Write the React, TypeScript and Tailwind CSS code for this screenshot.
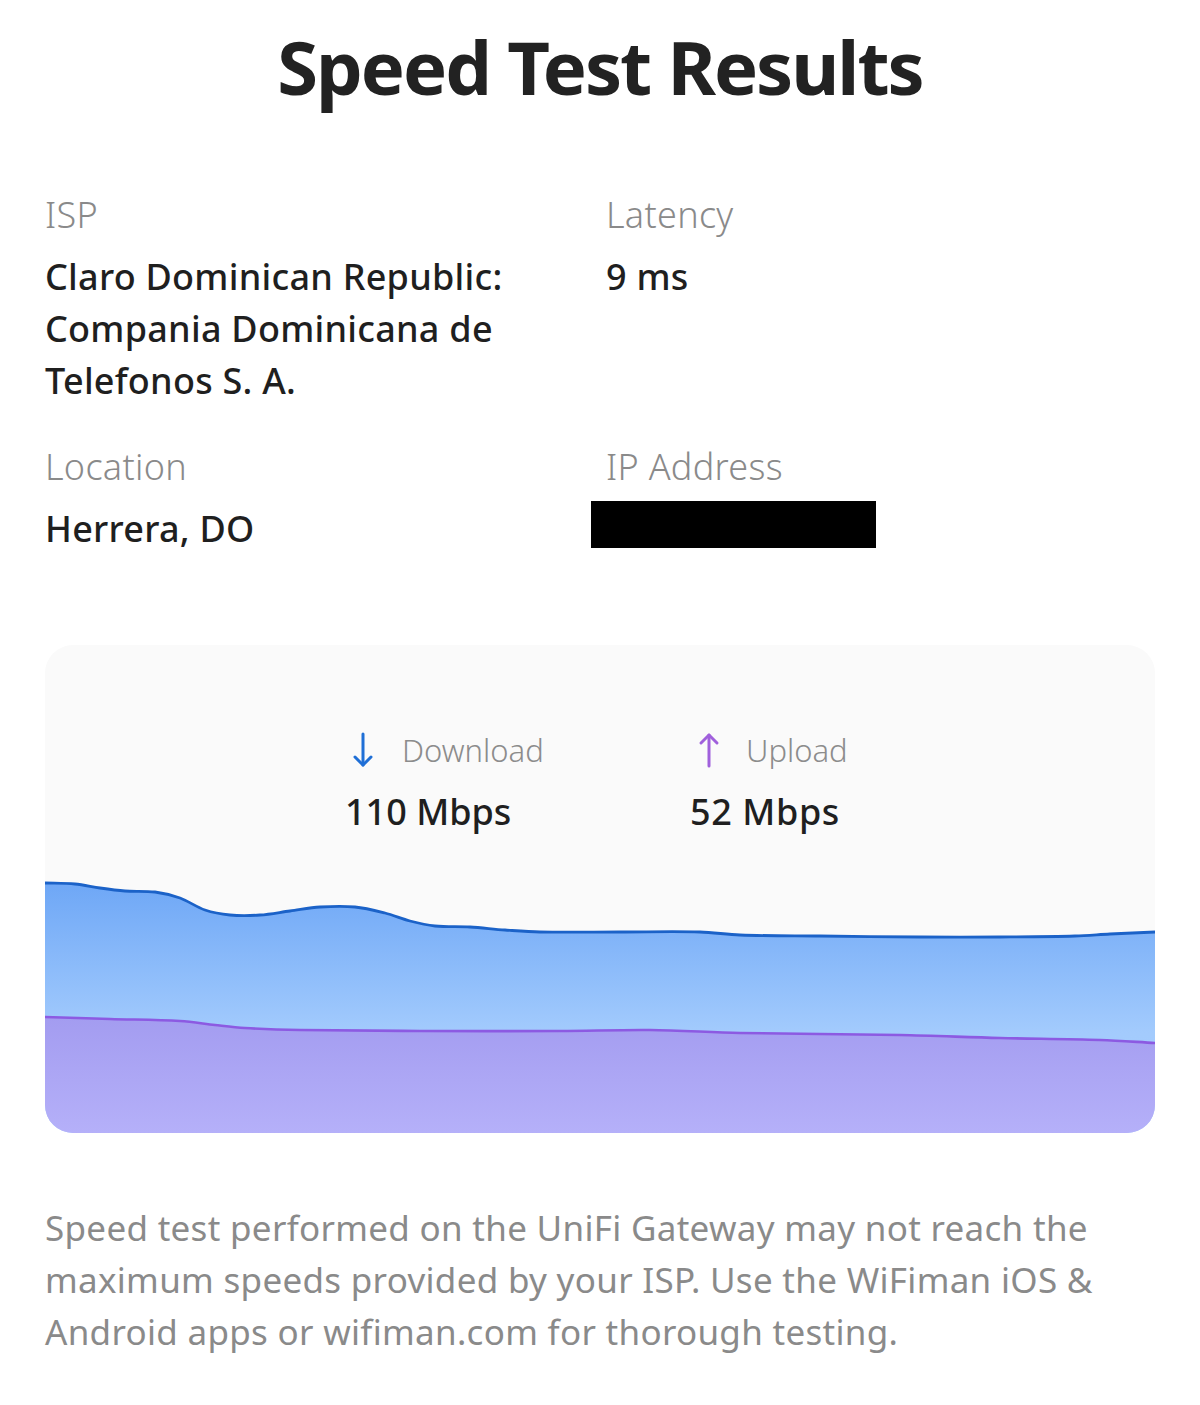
import React from "react";

type P = [number, number];

function smoothPath(pts: P[]): string {
  const n = pts.length;
  const slopes = pts.map((p, i) => {
    const a = pts[Math.max(0, i - 1)];
    const b = pts[Math.min(n - 1, i + 1)];
    return (b[1] - a[1]) / (b[0] - a[0]);
  });
  let d = `M${pts[0][0]},${pts[0][1]}`;
  for (let i = 0; i < n - 1; i++) {
    const p1 = pts[i];
    const p2 = pts[i + 1];
    const dx = (p2[0] - p1[0]) / 3;
    const c1x = p1[0] + dx;
    const c1y = p1[1] + slopes[i] * dx;
    const c2x = p2[0] - dx;
    const c2y = p2[1] - slopes[i + 1] * dx;
    d += ` C${c1x.toFixed(1)},${c1y.toFixed(1)} ${c2x.toFixed(1)},${c2y.toFixed(1)} ${p2[0]},${p2[1]}`;
  }
  return d;
}

const W = 1110;
const H = 260;
const TOP = 873;
const L = 45;

const downAbs: P[] = [
  [45, 883], [75, 884], [100, 888], [125, 891], [155, 892], [180, 898], [205, 910],
  [230, 915], [260, 915], [290, 911], [320, 907], [355, 907], [385, 913], [410, 921],
  [435, 926], [470, 927], [505, 930], [540, 932], [620, 932], [700, 932], [740, 935],
  [820, 936], [920, 937], [1000, 937], [1075, 936], [1110, 934], [1155, 932],
];
const upAbs: P[] = [
  [45, 1017], [110, 1019], [180, 1021], [215, 1025], [245, 1028], [300, 1030],
  [420, 1031], [560, 1031], [650, 1030], [740, 1033], [900, 1035], [1000, 1038],
  [1100, 1040], [1155, 1043],
];
const down = downAbs.map(([x, y]) => [x - L, y - TOP] as P);
const up = upAbs.map(([x, y]) => [x - L, y - TOP] as P);

function Chart() {
  const dLine = smoothPath(down);
  const uLine = smoothPath(up);
  return (
    <svg width={W} height={H} viewBox={`0 0 ${W} ${H}`} className="block">
      <defs>
        <linearGradient id="gDown" x1="0" y1="0" x2="0" y2="1">
          <stop offset="0" stopColor="#6ea7f6" />
          <stop offset="0.6" stopColor="#a3cbfd" />
          <stop offset="1" stopColor="#a8cefe" />
        </linearGradient>
        <linearGradient id="gUp" x1="0" y1="0" x2="0" y2="1">
          <stop offset="0" stopColor="#a39cf0" />
          <stop offset="1" stopColor="#b5b0f9" />
        </linearGradient>
      </defs>
      <path d={`${dLine} L${W},${H} L0,${H} Z`} fill="url(#gDown)" />
      <path d={dLine} fill="none" stroke="#1b62c8" strokeWidth="2.8" />
      <path d={`${uLine} L${W},${H} L0,${H} Z`} fill="url(#gUp)" />
      <path d={uLine} fill="none" stroke="#8c5ae2" strokeWidth="2.6" />
    </svg>
  );
}

function Arrow({ dir, color }: { dir: "down" | "up"; color: string }) {
  return (
    <svg width="22" height="38" viewBox="0 0 22 38" fill="none" stroke={color} strokeWidth="3" strokeLinecap="round" strokeLinejoin="round">
      {dir === "down" ? (
        <>
          <path d="M11 3 V34" />
          <path d="M3 26 L11 34 L19 26" />
        </>
      ) : (
        <>
          <path d="M11 35 V4" />
          <path d="M3 12 L11 4 L19 12" />
        </>
      )}
    </svg>
  );
}

export default function App() {
  const font = { fontFamily: '"Noto Sans", "Open Sans", sans-serif' };
  const label = "text-[36px] leading-[52px] font-light text-[#8a8a8a] tracking-[0.3px]";
  const value = "mt-[10px] text-[36px] leading-[52px] font-medium tracking-[0.25px]";
  return (
    <div className="w-[1200px] h-[1405px] bg-white text-[#1f1f1f]" style={font}>
      <div className="px-[45px]">
        <h1 className="pt-[27px] text-center text-[74px] leading-[80px] font-bold tracking-[-2px] text-[#222]">
          Speed Test Results
        </h1>

        <div className="mt-[82px] grid grid-cols-[561px_1fr] gap-y-[34px]">
          <div>
            <div className={label}>ISP</div>
            <div className={`${value} w-[510px]`}>
              Claro Dominican Republic: Compania Dominicana de Telefonos S. A.
            </div>
          </div>
          <div>
            <div className={label}>Latency</div>
            <div className={value}>9 ms</div>
          </div>
          <div>
            <div className={label}>Location</div>
            <div className={value}>Herrera, DO</div>
          </div>
          <div>
            <div className={label}>IP Address</div>
            <div className="mt-[8px] -ml-[15px] w-[285px] h-[47px] bg-black" />
          </div>
        </div>

        <div className="mt-[90px] h-[488px] rounded-[28px] bg-[#fafafa] overflow-hidden flex flex-col">
          <div className="flex pl-[300px] pt-[84px]">
            <div className="w-[345px]">
              <div className="flex items-center h-[42px]">
                <div className="w-[57px] pl-[7px]">
                  <Arrow dir="down" color="#1f6fd6" />
                </div>
                <span className="text-[31px] font-light text-[#8c8c8c]">Download</span>
              </div>
              <div className="mt-[20px] text-[36px] leading-[42px] font-medium">110 Mbps</div>
            </div>
            <div>
              <div className="flex items-center h-[42px]">
                <div className="w-[56px] pl-[8px]">
                  <Arrow dir="up" color="#a060dc" />
                </div>
                <span className="text-[31px] font-light text-[#8c8c8c]">Upload</span>
              </div>
              <div className="mt-[20px] text-[36px] leading-[42px] font-medium tracking-[0.6px]">52 Mbps</div>
            </div>
          </div>
          <div className="mt-auto">
            <Chart />
          </div>
        </div>

        <p className="mt-[69px] text-[35px] leading-[52px] font-normal text-[#8a8a8a] tracking-[0.3px] whitespace-nowrap">
          Speed test performed on the UniFi Gateway may not reach the
          <br />
          maximum speeds provided by your ISP. Use the WiFiman iOS &amp;
          <br />
          Android apps or wifiman.com for thorough testing.
        </p>
      </div>
    </div>
  );
}
